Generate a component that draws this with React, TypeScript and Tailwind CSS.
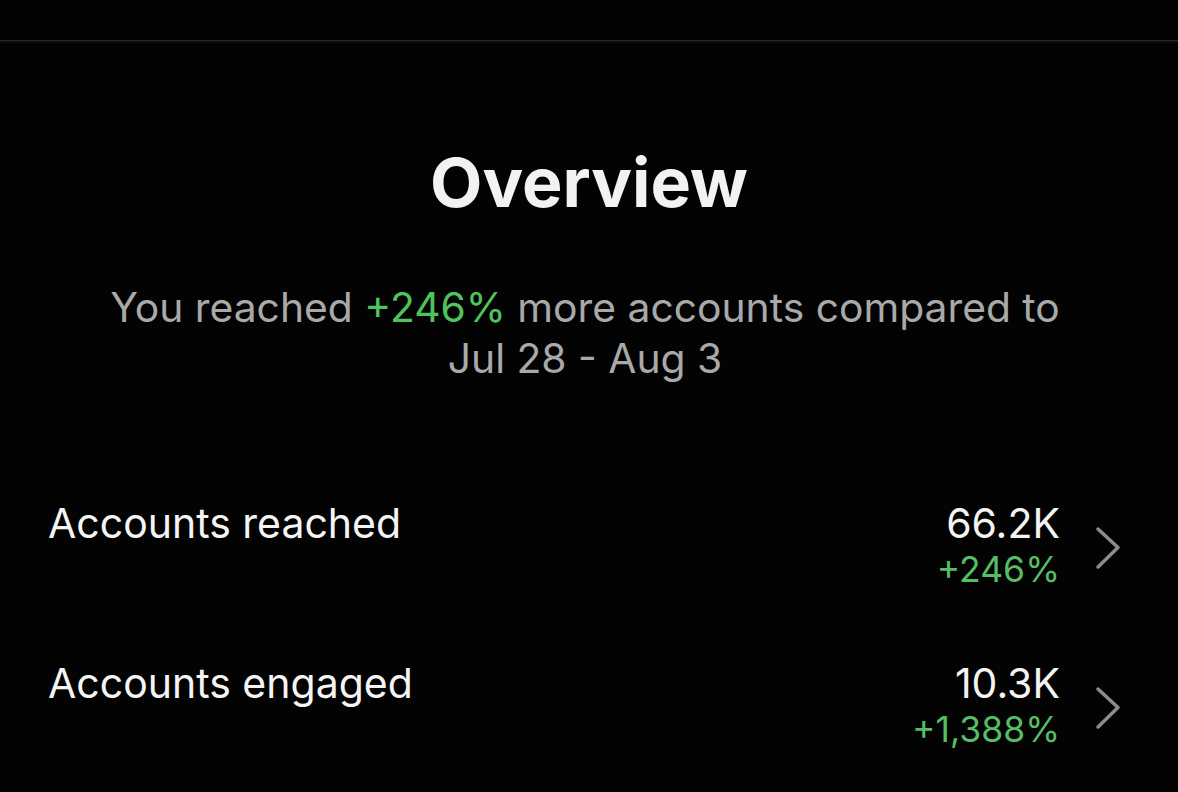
import React from "react";

function Chevron() {
  return (
    <svg width="26" height="44" viewBox="0 0 26 44" className="shrink-0">
      <polyline
        points="3,3 23,21.5 3,41"
        fill="none"
        stroke="#8c8c8c"
        strokeWidth="3.5"
        strokeLinecap="round"
        strokeLinejoin="round"
      />
    </svg>
  );
}

function Row({ label, value, delta, mt }: { label: string; value: string; delta: string; mt: string }) {
  return (
    <div className={`flex items-start justify-between pl-[48px] pr-[57px] ${mt}`}>
      <div className="text-[41px] leading-[42px] text-[#f4f4f4]">{label}</div>
      <div className="flex items-center gap-[35px]">
        <div className="flex flex-col items-end">
          <div className="text-[41px] leading-[42px] text-[#f4f4f4]">{value}</div>
          <div className="mt-[3px] text-[35.5px] leading-[46px] text-[#55bd63]">{delta}</div>
        </div>
        <Chevron />
      </div>
    </div>
  );
}

export default function App() {
  return (
    <div
      className="h-[792px] w-full overflow-hidden bg-[#030303]"
      style={{ fontFamily: "Inter, 'Noto Sans', sans-serif" }}
    >
      <div className="h-[40px]" />
      <div className="h-px bg-[#2b2b2b]" />
      <div className="h-[2px] bg-[#0c0c0c]" />
      <h1 className="mt-[104px] text-center text-[68px] font-bold leading-[70px] text-[#f2f2f2]">
        Overview
      </h1>
      <p className="mx-auto mt-[65px] w-[1040px] pr-[8px] text-center text-[40.8px] leading-[51px] text-[#a9a9a9]">
        You reached <span className="text-[#4fc35e]">+246%</span> more accounts compared to
        <br />
        Jul 28 - Aug 3
      </p>
      <Row label="Accounts reached" value="66.2K" delta="+246%" mt="mt-[118px]" />
      <Row label="Accounts engaged" value="10.3K" delta="+1,388%" mt="mt-[69px]" />
    </div>
  );
}
